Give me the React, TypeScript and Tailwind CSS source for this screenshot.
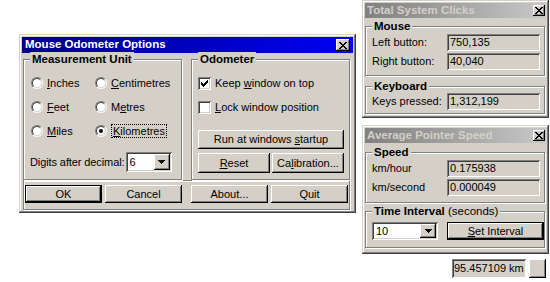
import type { ReactNode } from 'react'

const raisedWin =
  'shadow-[inset_-1px_-1px_0_#404040,inset_1px_1px_0_#d4d0c8,inset_-2px_-2px_0_#808080,inset_2px_2px_0_#ffffff]'
const raisedBtn =
  'shadow-[inset_-1px_-1px_0_#000000,inset_1px_1px_0_#ffffff,inset_-2px_-2px_0_#808080,inset_2px_2px_0_#d4d0c8]'
const sunken =
  'shadow-[inset_1px_1px_0_#808080,inset_-1px_-1px_0_#ffffff,inset_2px_2px_0_#404040,inset_-2px_-2px_0_#d4d0c8]'
const etched = 'border border-[#808080] shadow-[inset_1px_1px_0_#ffffff,1px_1px_0_#ffffff]'

// tiny pixel glyphs
const closeX = ['xx....xx', '.xx..xx.', '..xxxx..', '...xx...', '..xxxx..', '.xx..xx.', 'xx....xx']
const tick = ['......x', '.....xx', 'x...xxx', 'xx.xxx.', 'xxxxx..', '.xxx...', '..x....']
const arrow = ['xxxxxxx', '.xxxxx.', '..xxx..', '...x...']

function Pixels({ map }: { map: string[] }) {
  return (
    <svg width={map[0].length} height={map.length} shapeRendering="crispEdges">
      {map.flatMap((row, y) =>
        row
          .split('')
          .map((c, x) =>
            c === 'x' ? <rect key={`${x}-${y}`} x={x} y={y} width={1} height={1} fill="#000" /> : null
          )
      )}
    </svg>
  )
}

function Window({
  title,
  active,
  className,
  children,
}: {
  title: string
  active?: boolean
  className: string
  children: ReactNode
}) {
  return (
    <div className={`flex flex-col bg-[#d4d0c8] p-[3px] ${raisedWin} ${className}`}>
      <div
        className={`flex items-center ${
          active
            ? 'h-[16px] pl-[3px] pr-[3px] bg-linear-to-r from-[#00008c] to-[#0000f4] text-white'
            : 'h-[15px] pl-[2px] pr-[1px] bg-linear-to-r from-[#808080] to-[#c8c8c8] text-[#d4d0c8]'
        }`}
      >
        <span className="flex-1 text-[11.5px] font-bold leading-none">{title}</span>
        <span
          className={`flex items-center justify-center bg-[#d4d0c8] ${raisedBtn} ${
            active ? 'w-[14px] h-[12px]' : 'w-[12px] h-[11px]'
          }`}
        >
          <Pixels map={closeX} />
        </span>
      </div>
      {children}
    </div>
  )
}

function Group({ label, className, children }: { label: ReactNode; className: string; children: ReactNode }) {
  return (
    <div className={`relative ${etched} ${className}`}>
      <span className="absolute -top-[8px] left-[6px] bg-[#d4d0c8] px-[2px] text-[11.5px] leading-[14px]">
        {label}
      </span>
      {children}
    </div>
  )
}

function Btn({ children, def, className }: { children: ReactNode; def?: boolean; className: string }) {
  if (def) {
    return (
      <div className={`border border-black ${className}`}>
        <div className={`h-full flex items-center justify-center bg-[#d4d0c8] ${raisedBtn}`}>{children}</div>
      </div>
    )
  }
  return <div className={`flex items-center justify-center bg-[#d4d0c8] ${raisedBtn} ${className}`}>{children}</div>
}

function Radio({ checked }: { checked?: boolean }) {
  return (
    <span className="flex size-[12px] rounded-full border border-t-[#808080] border-l-[#808080] border-r-white border-b-white">
      <span className="flex flex-1 items-center justify-center rounded-full border border-t-[#404040] border-l-[#404040] border-r-[#d4d0c8] border-b-[#d4d0c8] bg-white">
        {checked && <span className="size-[4px] rounded-full bg-black" />}
      </span>
    </span>
  )
}

function RadioItem({ pre, u, post, checked }: { pre: string; u: string; post: string; checked?: boolean }) {
  const text = (
    <>
      {pre}
      <u>{u}</u>
      {post}
    </>
  )
  return (
    <div className="flex h-[16px] items-center gap-[4px]">
      <Radio checked={checked} />
      {checked ? <span className="border border-dotted border-black px-[1px] leading-[12px]">{text}</span> : <span>{text}</span>}
    </div>
  )
}

function Check({ checked }: { checked?: boolean }) {
  return (
    <span className={`flex size-[13px] items-center justify-center bg-white ${sunken}`}>
      {checked && <Pixels map={tick} />}
    </span>
  )
}

function Combo({ value, className }: { value: string; className: string }) {
  return (
    <div className={`flex bg-white p-[2px] ${sunken} ${className}`}>
      <span className="flex flex-1 items-center pl-[2px]">{value}</span>
      <span className={`flex w-[16px] items-center justify-center bg-[#d4d0c8] ${raisedBtn}`}>
        <Pixels map={arrow} />
      </span>
    </div>
  )
}

function Field({ value, className }: { value: string; className: string }) {
  return <div className={`flex h-[17px] items-center bg-[#d4d0c8] pl-[3px] ${sunken} ${className}`}>{value}</div>
}

function Row({ label, value }: { label: string; value: string }) {
  return (
    <div className="flex items-center">
      <span className="w-[75px]">{label}</span>
      <Field value={value} className="w-[93px]" />
    </div>
  )
}

export default function App() {
  return (
    <div className="flex h-[282px] w-[550px] overflow-hidden bg-white font-['Liberation_Sans',Arial,sans-serif] text-[11px] leading-[13px] text-black">
      <Window title="Mouse Odometer Options" active className="ml-[19px] mt-[34px] h-[179px] w-[337px]">
        <div className="mt-[6px] flex gap-[9px] pl-[1px]">
          <Group label={<b>Measurement Unit</b>} className="h-[121px] w-[159px] pl-[7px] pt-[15px]">
            <div className="grid grid-cols-[64px_1fr] gap-y-[8px]">
              <RadioItem pre="" u="I" post="nches" />
              <RadioItem pre="" u="C" post="entimetres" />
              <RadioItem pre="" u="F" post="eet" />
              <RadioItem pre="M" u="e" post="tres" />
              <RadioItem pre="" u="M" post="iles" />
              <RadioItem pre="" u="K" post="ilometres" checked />
            </div>
            <div className="mt-[13px] -ml-[1px] flex items-center">
              <span className="tracking-[-0.1px]">Digits after decimal:</span>
              <Combo value="6" className="ml-[1px] h-[20px] w-[46px]" />
            </div>
          </Group>
          <Group label={<b>Odometer</b>} className="h-[121px] w-[159px] pl-[6px] pt-[15px]">
            <div className="flex flex-col gap-[8px]">
              <div className="flex h-[16px] items-center gap-[4px]">
                <Check checked />
                <span>
                  Keep <u>w</u>indow on top
                </span>
              </div>
              <div className="flex h-[16px] items-center gap-[4px]">
                <Check />
                <span>
                  <u>L</u>ock window position
                </span>
              </div>
            </div>
            <Btn className="mt-[15px] h-[19px] w-[146px]">
              <span>
                Run at windows <u>s</u>tartup
              </span>
            </Btn>
            <div className="mt-[4px] flex gap-[2px]">
              <Btn className="h-[20px] w-[72px]">
                <span>
                  <u>R</u>eset
                </span>
              </Btn>
              <Btn className="h-[20px] w-[72px]">
                <span>
                  Ca<u>l</u>ibration...
                </span>
              </Btn>
            </div>
          </Group>
        </div>
        <div className={`ml-[1px] flex h-[30px] w-[327px] pl-[1px] pt-[4px] ${etched}`}>
          <Btn def className="h-[18px] w-[77px]">OK</Btn>
          <Btn className="ml-[3px] h-[18px] w-[77px]">Cancel</Btn>
          <Btn className="ml-[9px] h-[18px] w-[77px]">About...</Btn>
          <Btn className="ml-[3px] h-[18px] w-[77px]">Quit</Btn>
        </div>
      </Window>

      <div className="ml-[6px] flex w-[187px] flex-col">
        <Window title="Total System Clicks" className="h-[118px]">
          <Group label={<b>Mouse</b>} className="mt-[8px] h-[50px] w-[180px] pl-[6px] pt-[7px]">
            <div className="flex flex-col gap-[2px]">
              <Row label="Left button:" value="750,135" />
              <Row label="Right button:" value="40,040" />
            </div>
          </Group>
          <Group label={<b>Keyboard</b>} className="mt-[10px] h-[28px] w-[180px] pl-[6px] pt-[6px]">
            <Row label="Keys pressed:" value="1,312,199" />
          </Group>
        </Window>

        <Window title="Average Pointer Speed" className="mt-[7px] h-[129px]">
          <Group label={<b>Speed</b>} className="mt-[9px] h-[51px] w-[180px] pl-[6px] pt-[7px]">
            <div className="flex flex-col gap-[2px]">
              <Row label="km/hour" value="0.175938" />
              <Row label="km/second" value="0.000049" />
            </div>
          </Group>
          <Group
            label={
              <>
                <b>Time Interval</b> (seconds)
              </>
            }
            className="mt-[8px] h-[37px] w-[180px] pl-[6px] pt-[10px]"
          >
            <div className="flex items-center">
              <Combo value="10" className="h-[18px] w-[66px]" />
              <Btn def className="ml-[9px] h-[18px] w-[97px]">
                <span>
                  <u>S</u>et Interval
                </span>
              </Btn>
            </div>
          </Group>
        </Window>

        <div className="mt-[5px] flex justify-end gap-[3px] pr-[3px]">
          <div className={`flex h-[19px] w-[74px] items-center bg-[#d4d0c8] pl-[2px] ${sunken}`}>95.457109 km</div>
          <div className={`h-[19px] w-[17px] bg-[#d4d0c8] ${raisedBtn}`} />
        </div>
      </div>
    </div>
  )
}
